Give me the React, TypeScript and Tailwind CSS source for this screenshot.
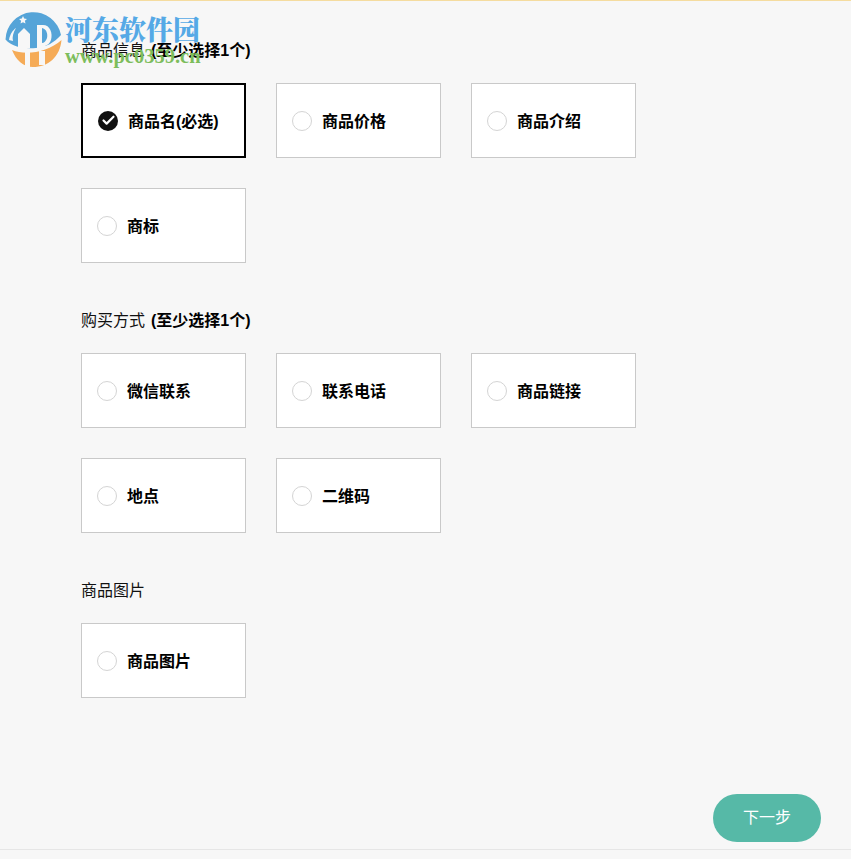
import { Check } from "lucide-react";

const FONT = "font-['Liberation_Sans','Noto_Sans_CJK_SC',sans-serif]";

const sections = [
  {
    title: "商品信息",
    hint: "(至少选择1个)",
    options: ["商品名(必选)", "商品价格", "商品介绍", "商标"],
  },
  {
    title: "购买方式",
    hint: "(至少选择1个)",
    options: ["微信联系", "联系电话", "商品链接", "地点", "二维码"],
  },
  {
    title: "商品图片",
    hint: "",
    options: ["商品图片"],
  },
];

function Option({ label, active }: { label: string; active: boolean }) {
  return (
    <div
      className={
        active
          ? "flex h-[75px] w-[165px] items-center gap-[10px] border-2 border-black bg-white pl-[15px]"
          : "flex h-[75px] w-[165px] items-center gap-[10px] border border-[#c9c9c9] bg-white pl-[15px]"
      }
    >
      {active ? (
        <span className="flex h-[20px] w-[20px] items-center justify-center rounded-full bg-[#111111]">
          <Check className="h-[15px] w-[15px] text-white" strokeWidth={3.5} />
        </span>
      ) : (
        <span className="h-[20px] w-[20px] rounded-full border border-[#d4d4d4] bg-white" />
      )}
      <span className="pt-[2px] text-base font-bold text-black">{label}</span>
    </div>
  );
}

function Watermark() {
  return (
    <div className="pointer-events-none absolute left-[4px] top-[10px] flex">
      <svg width="58" height="58" viewBox="0 0 58 58">
        {/* orange lower band with pillars */}
        <path d="M8 40 C22 46 44 42 57.5 30 C56 47 44 57 29 57 C19 57 12 50 8 40 Z" fill="#f5ab57" />
        <path d="M21 42 h5 v15 h-5 Z M35 41 h6 v14 h-6 Z" fill="#f7f7f7" />
        {/* blue dome */}
        <path d="M1.5 29.5 A28 28 0 0 1 57 25 C50 33 42 37 32 38 C20 39 8 37 1.5 29.5 Z" fill="#55a4d8" />
        <path d="M5 30 C6 24 9 20 12 18 C9 23 8 27 9 31 Z" fill="#f7f7f7" />
        <path d="M14 38 V24 L20 18 L26 24 V38 Z" fill="#f7f7f7" />
        <path d="M33 38 V15 H39 C46 15 49 23 47 30 C46 33 44 35 41 36 V38 Z" fill="#f7f7f7" />
        <path d="M38 18 C42 19 44 23 43 28 C42 31 40 33 38 33 Z" fill="#55a4d8" />
        <path d="M19 6 l1.2 2.6 2.8 .3 -2.1 1.9 .6 2.8 -2.5 -1.4 -2.5 1.4 .6 -2.8 -2.1 -1.9 2.8 -.3 Z" fill="#f7f7f7" />
      </svg>
      <div className="ml-[3px] flex flex-col">
        <span className="font-['Noto_Serif_CJK_SC','Noto_Sans_CJK_SC',serif] text-[27px] leading-[38px] font-black text-[#55a9e6]">
          河东软件园
        </span>
        <span className="font-['Liberation_Serif',serif] -mt-[2px] text-[20.5px] leading-[20px] font-bold text-[#7dbd5c]">
          www.pc0359.cn
        </span>
      </div>
    </div>
  );
}

export default function App() {
  return (
    <div className={`${FONT} relative flex h-[859px] w-[851px] flex-col overflow-hidden bg-[#f7f7f7]`}>
      <div className="h-px bg-[#f5dc9f]" />
      <div className="flex flex-1 flex-col gap-[47px] pl-[81px] pt-[39px]">
        {sections.map((s) => (
          <section key={s.title}>
            <h3 className="mb-[22px] flex h-[21px] gap-[6px] text-base leading-[21px] font-normal text-[#111111]">
              <span>{s.title}</span>
              {s.hint && <b className="font-bold text-black">{s.hint}</b>}
            </h3>
            <div className="grid w-[555px] grid-cols-[165px_165px_165px] gap-[30px]">
              {s.options.map((o) => (
                <Option key={o} label={o} active={o === "商品名(必选)"} />
              ))}
            </div>
          </section>
        ))}
      </div>
      <div className="flex justify-end pb-[7px] pr-[30px]">
        <button className="h-[48px] w-[108px] rounded-[24px] bg-[#56b9a7] text-base font-normal text-white">下一步</button>
      </div>
      <div className="h-[10px] border-t border-[#e6e6e6] bg-[#f7f7f7]" />
      <Watermark />
    </div>
  );
}
